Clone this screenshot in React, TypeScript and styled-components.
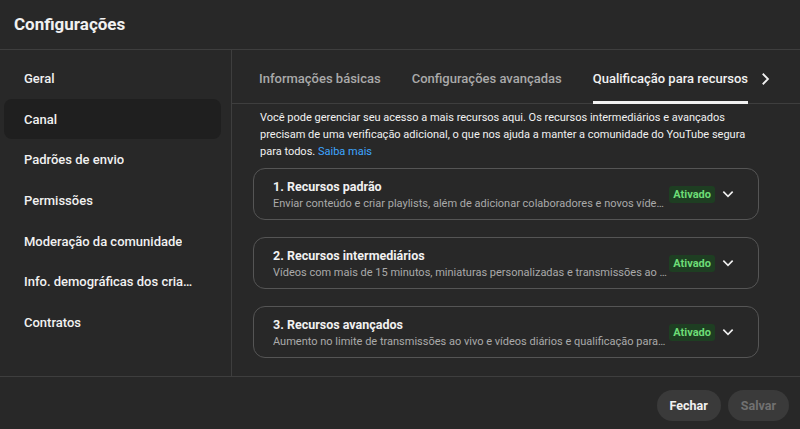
import React from "react";
import styled, { createGlobalStyle } from "styled-components";

const Global = createGlobalStyle`
  html, body {
    margin: 0;
    padding: 0;
    background: #282828;
  }
  body {
    font-family: Roboto, "Noto Sans", Arial, sans-serif;
    color: #f1f1f1;
  }
  * { box-sizing: border-box; }
`;

const Dialog = styled.div`
  width: 800px;
  height: 429px;
  display: flex;
  flex-direction: column;
  background: #282828;
  overflow: hidden;
`;

const Header = styled.header`
  height: 50px;
  flex-shrink: 0;
  display: flex;
  align-items: center;
  padding: 0 14px 2px;
  border-bottom: 1px solid #3e3e3e;

  h1 {
    margin: 0;
    font-size: 17px;
    font-weight: 700;
    color: #f1f1f1;
  }
`;

const Body = styled.div`
  flex: 1;
  display: flex;
  min-height: 0;
  border-bottom: 1px solid #3e3e3e;
`;

const Sidebar = styled.nav`
  width: 232px;
  flex-shrink: 0;
  border-right: 1px solid #3e3e3e;
  padding: 8px 10px 0 4px;
  display: flex;
  flex-direction: column;
`;

const NavItem = styled.div<{ $active?: boolean }>`
  height: 40.7px;
  flex-shrink: 0;
  display: flex;
  align-items: center;
  padding: 0 25px 0 20px;
  border-radius: 8px;
  font-size: 13px;
  font-weight: 500;
  color: #f1f1f1;
  background: ${(p) => (p.$active ? "#1f1f1f" : "transparent")};

  span {
    white-space: nowrap;
    overflow: hidden;
    text-overflow: ellipsis;
  }
`;

const Main = styled.section`
  flex: 1;
  min-width: 0;
  display: flex;
  flex-direction: column;
`;

const Tabs = styled.div`
  height: 54px;
  flex-shrink: 0;
  display: flex;
  align-items: stretch;
  padding-left: 27px;
  border-bottom: 1px solid #3e3e3e;
`;

const Tab = styled.div<{ $active?: boolean }>`
  display: flex;
  align-items: center;
  margin-right: 31px;
  padding-top: 6px;
  font-size: 13px;
  font-weight: 500;
  white-space: nowrap;
  color: ${(p) => (p.$active ? "#f1f1f1" : "#aaaaaa")};
  border-bottom: 3px solid ${(p) => (p.$active ? "#f1f1f1" : "transparent")};
  margin-bottom: -1px;
`;

const TabArrow = styled.div`
  display: flex;
  align-items: center;
  margin-left: -23px;
  padding-top: 4px;
`;

const Content = styled.div`
  padding: 5px 0 0 21px;
  width: 527px;
`;

const Intro = styled.p`
  margin: 0 0 8px 7px;
  font-size: 11px;
  line-height: 17px;
  color: #f1f1f1;

  a {
    color: #3ea6ff;
    text-decoration: none;
  }
`;

const CardList = styled.div`
  display: flex;
  flex-direction: column;
  gap: 17px;
`;

const Card = styled.div`
  height: 52px;
  border: 1px solid #555555;
  border-radius: 12px;
  display: flex;
  align-items: center;
  padding: 0 22px 0 19px;
`;

const CardText = styled.div`
  flex: 1;
  min-width: 0;
  display: flex;
  flex-direction: column;
  gap: 3px;
`;

const CardTitle = styled.div`
  font-size: 12.5px;
  font-weight: 700;
  color: #f1f1f1;
`;

const CardDesc = styled.div`
  font-size: 11px;
  color: #aaaaaa;
  white-space: nowrap;
  overflow: hidden;
  text-overflow: ellipsis;
`;

const Badge = styled.span`
  margin-left: 2px;
  height: 17px;
  padding: 0 4px;
  display: flex;
  align-items: center;
  border-radius: 3px;
  background: #1e3e22;
  color: #6ddc76;
  font-size: 11px;
  font-weight: 700;
`;

const Chevron = styled.div`
  display: flex;
  align-items: center;
  margin-left: 5px;
`;

const Footer = styled.footer`
  height: 52px;
  flex-shrink: 0;
  display: flex;
  align-items: center;
  justify-content: flex-end;
  gap: 7px;
  padding: 4px 11px 0 0;
`;

const Button = styled.button<{ $disabled?: boolean }>`
  height: 31px;
  padding: 0 13px;
  border: none;
  border-radius: 16px;
  background: #3a3a3a;
  font-family: inherit;
  font-size: 12.5px;
  font-weight: 700;
  color: ${(p) => (p.$disabled ? "#717171" : "#f1f1f1")};
  min-width: 61px;
`;

const ChevronDown = () => (
  <svg width="16" height="16" viewBox="0 0 24 24" fill="none" stroke="#f1f1f1" strokeWidth="2.4">
    <path d="M5 8.5l7 7 7-7" />
  </svg>
);

const ChevronRight = () => (
  <svg width="18" height="18" viewBox="0 0 24 24" fill="none" stroke="#f1f1f1" strokeWidth="2.4">
    <path d="M9 5l7 7-7 7" />
  </svg>
);

const nav = [
  "Geral",
  "Canal",
  "Padrões de envio",
  "Permissões",
  "Moderação da comunidade",
  "Info. demográficas dos criadores",
  "Contratos",
];

const cards = [
  {
    title: "1. Recursos padrão",
    desc: "Enviar conteúdo e criar playlists, além de adicionar colaboradores e novos vídeos",
  },
  {
    title: "2. Recursos intermediários",
    desc: "Vídeos com mais de 15 minutos, miniaturas personalizadas e transmissões ao vivo",
  },
  {
    title: "3. Recursos avançados",
    desc: "Aumento no limite de transmissões ao vivo e vídeos diários e qualificação para monetização",
  },
];

export default function App() {
  return (
    <Dialog>
      <Global />
      <Header>
        <h1>Configurações</h1>
      </Header>
      <Body>
        <Sidebar>
          {nav.map((n) => (
            <NavItem key={n} $active={n === "Canal"}>
              <span>{n}</span>
            </NavItem>
          ))}
        </Sidebar>
        <Main>
          <Tabs>
            <Tab>Informações básicas</Tab>
            <Tab>Configurações avançadas</Tab>
            <Tab $active>Qualificação para recursos</Tab>
            <TabArrow>
              <ChevronRight />
            </TabArrow>
          </Tabs>
          <Content>
            <Intro>
              Você pode gerenciar seu acesso a mais recursos aqui. Os recursos intermediários e avançados
              precisam de uma verificação adicional, o que nos ajuda a manter a comunidade do YouTube segura
              para todos. <a href="#">Saiba mais</a>
            </Intro>
            <CardList>
              {cards.map((c) => (
                <Card key={c.title}>
                  <CardText>
                    <CardTitle>{c.title}</CardTitle>
                    <CardDesc>{c.desc}</CardDesc>
                  </CardText>
                  <Badge>Ativado</Badge>
                  <Chevron>
                    <ChevronDown />
                  </Chevron>
                </Card>
              ))}
            </CardList>
          </Content>
        </Main>
      </Body>
      <Footer>
        <Button>Fechar</Button>
        <Button $disabled>Salvar</Button>
      </Footer>
    </Dialog>
  );
}
